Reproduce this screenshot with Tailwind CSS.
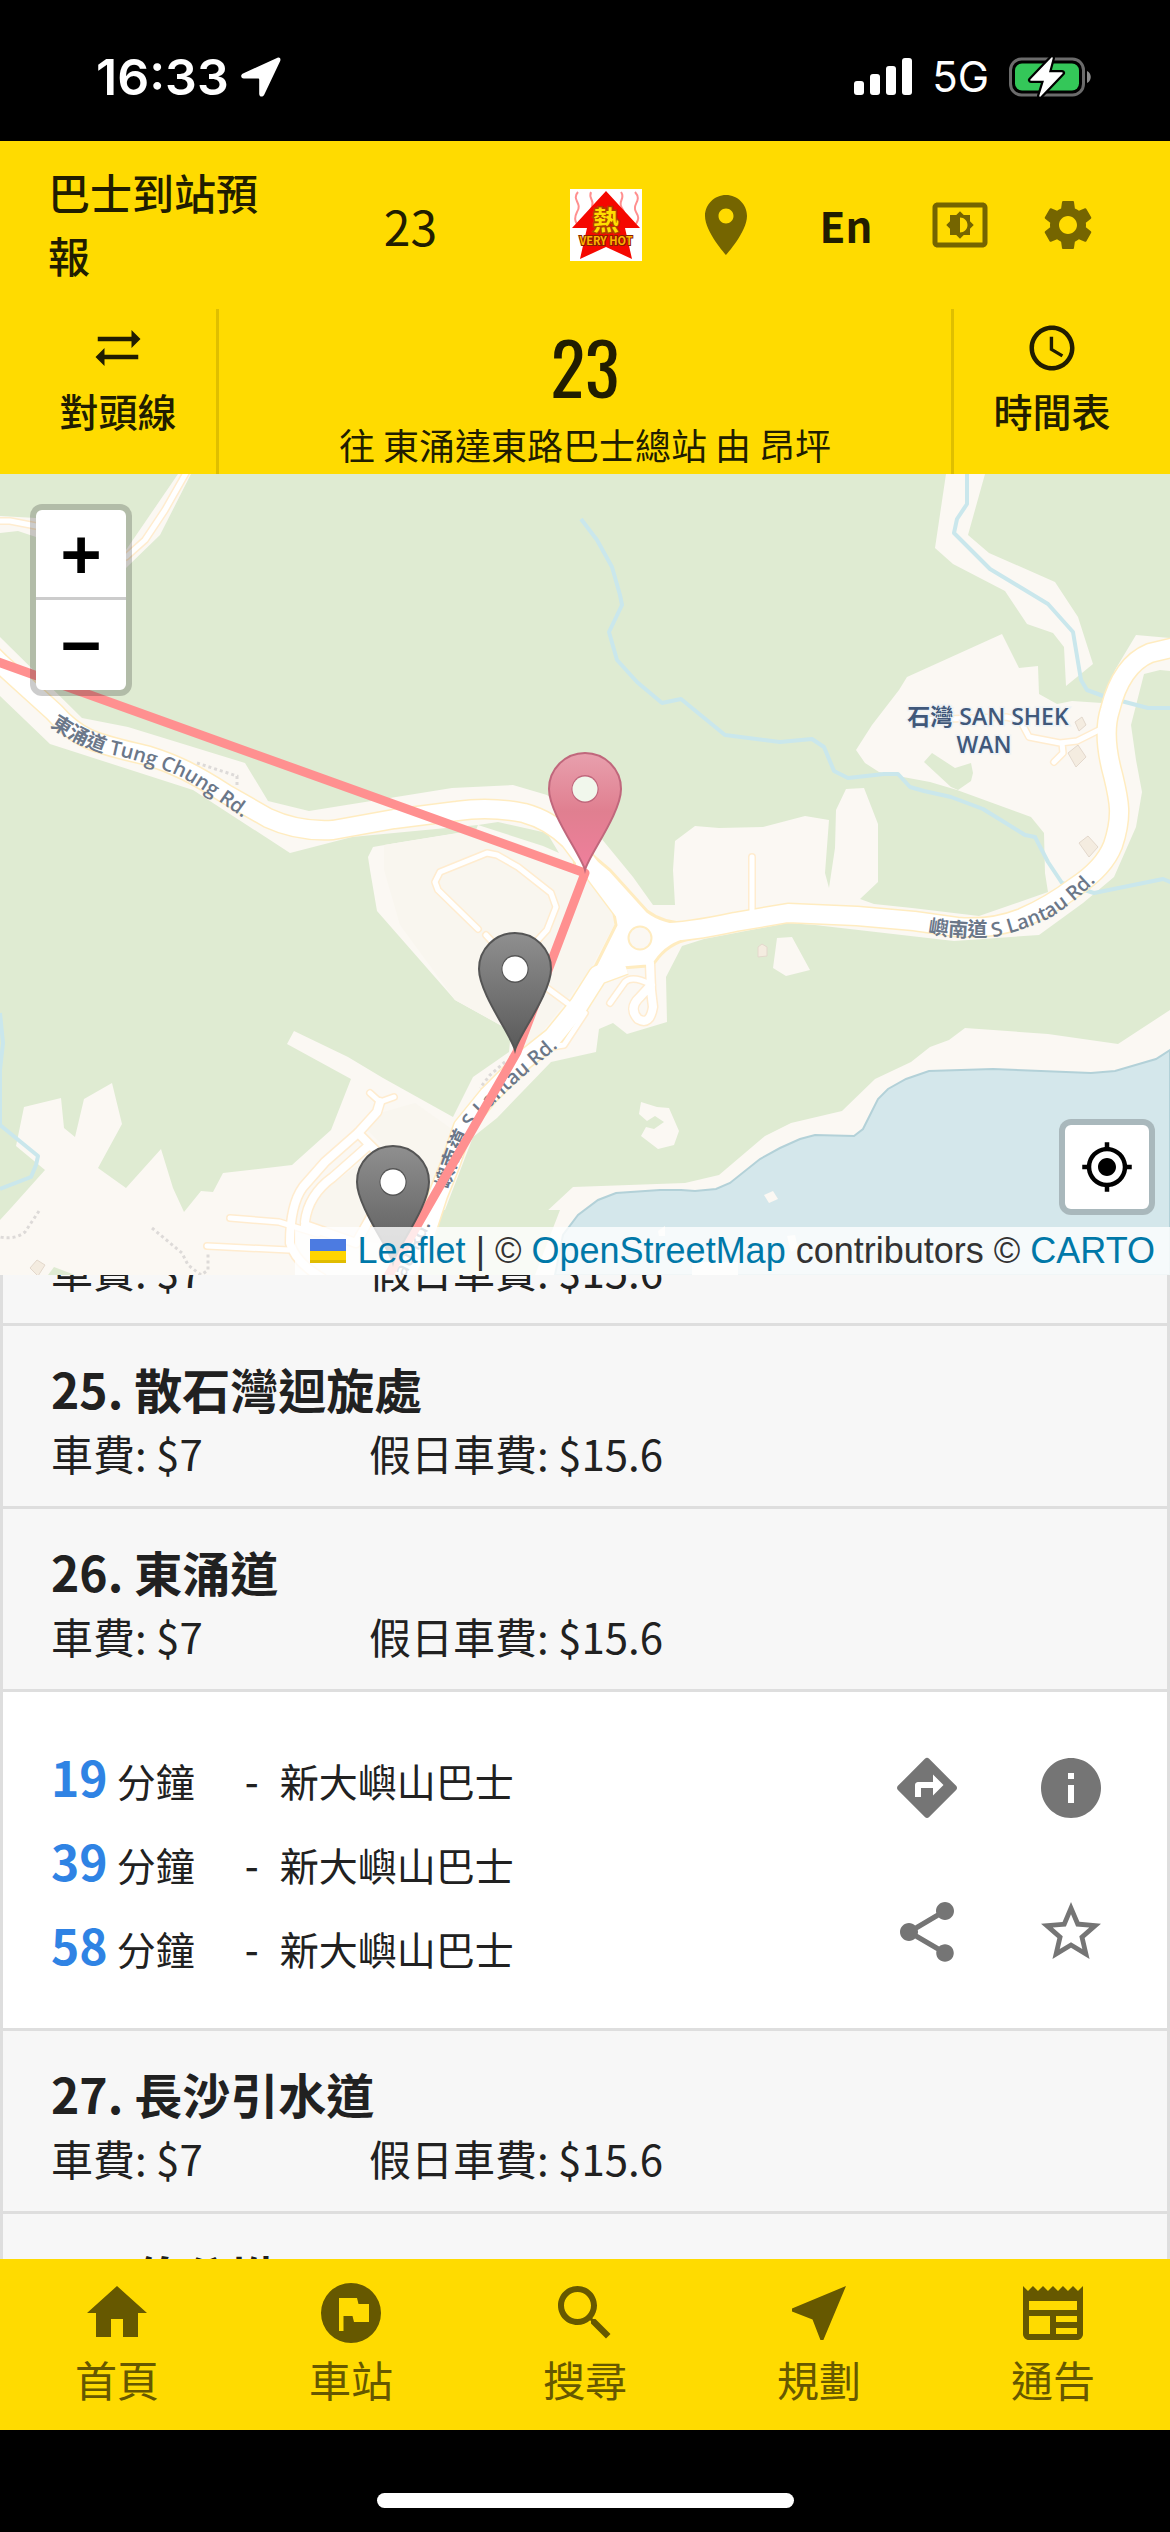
<!DOCTYPE html>
<html lang="zh-HK">
<head>
    <meta charset="UTF-8">
    <meta name="viewport" content="width=device-width, initial-scale=1.0">
    <title>23 往 東涌達東路巴士總站 - 巴士到站預報</title>
    <script src="https://cdn.jsdelivr.net/npm/@tailwindcss/browser@4"></script>
</head>
<body class="bg-black">
<div class="flex flex-col h-screen overflow-hidden text-[#212121] font-['Noto_Sans_CJK_TC','Noto_Sans',sans-serif]">

    <!-- Status bar -->
    <div class="h-[141px] shrink-0 bg-black text-white flex items-center justify-between pl-24 pr-[78px] pb-[52px] pt-16 font-['Inter',sans-serif]">
        <div class="flex items-center gap-3">
            <span class="text-[50px] leading-none font-semibold">16:33</span>
            <svg class="w-10 h-10" viewBox="0 0 40 40" fill="#fff"><path d="M36.500.8 2 16.500c-2.800 1.300-2.200 5 .8 5H17c.8 0 1.200.4 1.200 1.200v14.200c0 3 3.800 3.600 5 .8L39.200 4c.9-2.200-.6-4-2.700-3.200z"/></svg>
        </div>
        <div class="flex items-center gap-5">
            <svg class="w-[58px] h-[38px]" viewBox="0 0 58 38" fill="#fff">
                <rect x="0" y="23" width="10" height="14" rx="3"/>
                <rect x="16" y="16" width="10" height="21" rx="3"/>
                <rect x="32" y="8" width="10" height="29" rx="3"/>
                <rect x="48" y="0" width="10" height="37" rx="3"/>
            </svg>
            <span class="text-[42px] leading-none">5G</span>
            <svg class="w-[83px] h-[42px]" viewBox="0 0 83 42">
                <rect x="1.500" y="3" width="73" height="36" rx="11" fill="none" stroke="#6b6b6b" stroke-width="3"/>
                <path d="M78 15c5 2 5 10 0 12z" fill="#8b8b8b"/>
                <rect x="6" y="7.500" width="64" height="27" rx="7" fill="#34c759"/>
                <path d="M43 2 22 24h14l-5 16 22-23H39z" fill="#fff" stroke="#000" stroke-width="6" stroke-linejoin="round"/>
                <path d="M43 2 22 24h14l-5 16 22-23H39z" fill="#fff" stroke="#fff" stroke-width="1.500" stroke-linejoin="round"/>
            </svg>
        </div>
    </div>

    <!-- Toolbar -->
    <header class="h-[168px] shrink-0 bg-[#ffdb00] text-[#211d00] flex items-center justify-between pl-12 pr-[72px]">
        <h1 class="w-[211px] pb-1 text-[42px] leading-[63px] font-medium"><a href="#">巴士到站預報</a></h1>
        <input type="text" value="23" aria-label="路線" class="w-[150px] mr-2 text-center text-[48px] leading-[72px] bg-transparent outline-none">
        <div class="flex items-center gap-12 text-[#756500]">
            <a href="#" aria-label="酷熱天氣警告">
                <svg class="w-[72px] h-[72px]" viewBox="0 0 72 72">
                    <rect width="72" height="72" fill="#fff"/>
                    <g fill="none" stroke="#ff8f8f" stroke-width="2">
                        <path d="M8 3c-7 8 5 11-1 20-2 4-3 8 0 12M21 3c-3 7 4 8 1 15-3 6-3 8-1 12M51 3c5 7-4 9 1 16 3 4 2 7 0 11M65 3c8 9-4 12 1 20 3 5 3 7 0 12"/>
                    </g>
                    <path d="M36 2 2 39h15L10 70l26-12 26 12-7-31h15z" fill="#f50800"/>
                    <text x="36" y="41" text-anchor="middle" font-size="26" font-weight="700" fill="#ffdf00" stroke="#b04000" stroke-width="3" paint-order="stroke">熱</text>
                    <text x="36" y="56" text-anchor="middle" font-size="11" font-weight="700" fill="#ffb400" stroke="#8a2000" stroke-width="2" paint-order="stroke">VERY HOT</text>
                </svg>
            </a>
            <button aria-label="位置">
                <svg class="w-[72px] h-[72px]" viewBox="0 0 24 24" fill="currentColor"><path d="M12 2C8.130 2 5 5.130 5 9c0 5.250 7 13 7 13s7-7.750 7-13c0-3.870-3.130-7-7-7m0 9.500c-1.380 0-2.500-1.120-2.500-2.500s1.120-2.500 2.500-2.500 2.500 1.120 2.500 2.500-1.120 2.500-2.500 2.500"/></svg>
            </button>
            <button class="w-[72px] text-[42px] leading-[60px] font-bold text-[#211d00]">En</button>
            <button aria-label="亮度">
                <svg class="w-[60px] h-[60px]" viewBox="0 0 24 24" fill="currentColor"><path d="M21 3H3c-1.100 0-2 .9-2 2v14c0 1.100.9 2 2 2h18c1.100 0 2-.9 2-2V5c0-1.100-.9-2-2-2m0 16.010H3V4.990h18zM8 16h2.500l1.500 1.500 1.500-1.500H16v-2.500l1.500-1.500-1.500-1.500V8h-2.500L12 6.500 10.500 8H8v2.500L6.500 12 8 13.500zm4-7c1.660 0 3 1.340 3 3s-1.340 3-3 3z"/></svg>
            </button>
            <button aria-label="設定">
                <svg class="w-[60px] h-[60px]" viewBox="0 0 24 24" fill="currentColor"><path d="M19.140 12.940c.04-.3.060-.61.060-.94 0-.32-.02-.64-.07-.94l2.030-1.580c.18-.14.230-.41.120-.61l-1.920-3.320c-.12-.22-.37-.29-.59-.22l-2.390.96c-.5-.38-1.030-.7-1.620-.94l-.36-2.540c-.04-.24-.24-.41-.48-.41h-3.840c-.24 0-.43.170-.47.410l-.36 2.540c-.59.240-1.130.570-1.620.940l-2.390-.96c-.22-.08-.47 0-.59.220L2.740 8.870c-.12.210-.08.470.120.610l2.030 1.580c-.05.3-.09.630-.09.940s.02.640.07.940l-2.030 1.580c-.18.140-.23.410-.12.610l1.920 3.320c.12.220.37.290.59.220l2.390-.96c.5.380 1.030.7 1.620.94l.36 2.540c.05.240.24.410.48.410h3.840c.24 0 .44-.17.470-.41l.36-2.540c.59-.24 1.130-.56 1.620-.94l2.390.96c.22.080.47 0 .59-.22l1.920-3.320c.12-.22.070-.47-.12-.61zM12 15.600c-1.980 0-3.600-1.620-3.600-3.600s1.620-3.600 3.600-3.600 3.600 1.620 3.600 3.600-1.620 3.600-3.600 3.600"/></svg>
            </button>
        </div>
    </header>

    <!-- Route header -->
    <section class="h-[165px] shrink-0 bg-[#ffdb00] text-[#211d00] flex">
        <button class="w-[219px] pl-5 border-r-[3px] border-[#dfbf00] flex flex-col items-center pt-3">
            <svg class="w-[54px] h-[54px]" viewBox="0 0 24 24" fill="currentColor"><path d="m18 12 4-4-4-4v3H3v2h15zM6 12l-4 4 4 4v-3h15v-2H6z"/></svg>
            <span class="text-[39px] leading-[70px] font-medium">對頭線</span>
        </button>
        <div class="flex-1 flex flex-col items-center justify-end">
            <h2 class="text-[72px] leading-[96px] font-normal font-['Oswald','Liberation_Sans_Narrow','Open_Sans_Condensed','Roboto_Condensed',sans-serif]">23</h2>
            <p class="text-[36px] leading-[60px]">往 東涌達東路巴士總站 由 昂坪</p>
        </div>
        <button class="w-[219px] pr-5 border-l-[3px] border-[#dfbf00] flex flex-col items-center pt-3">
            <svg class="w-[54px] h-[54px]" viewBox="0 0 24 24" fill="currentColor"><path d="M11.990 2C6.470 2 2 6.480 2 12s4.470 10 9.990 10C17.520 22 22 17.520 22 12S17.520 2 11.990 2M12 20c-4.420 0-8-3.580-8-8s3.580-8 8-8 8 3.580 8 8-3.580 8-8 8m.5-13H11v6l5.250 3.150.75-1.230-4.500-2.670z"/></svg>
            <span class="text-[39px] leading-[70px] font-medium">時間表</span>
        </button>
    </section>

    <!-- Map -->
    <section class="relative h-[801px] shrink-0 bg-[#dfebd2] overflow-hidden">
        <svg class="block w-full h-full" viewBox="0 474 1170 801" preserveAspectRatio="xMidYMid slice">
            <defs>
                <linearGradient id="grayPin" x1="0" y1="0" x2="0" y2="1">
                    <stop offset="0" stop-color="#8f8f8f"/><stop offset="1" stop-color="#5a5a5a"/>
                </linearGradient>
                <linearGradient id="pinkPin" x1="0" y1="0" x2="0" y2="1">
                    <stop offset="0" stop-color="#e8a0ad"/><stop offset=".5" stop-color="#e07f90"/><stop offset="1" stop-color="#f07f9c"/>
                </linearGradient>
                <path id="pin" d="M0-1C-4-16-36-58-36-82A36 36 0 0 1 36-82C36-58 4-16 0-1zM0-95A12.500 13 0 1 0 .1-95z" fill-rule="evenodd"/>
                <path id="tungChung" d="M50 726Q75 744 104 753Q150 762 185 779Q220 800 275 842"/>
                <path id="lantauEast" d="M928 933Q960 939 995 937Q1025 930 1050 918Q1080 900 1116 860"/>
                <path id="lantauSouth" d="M449 1190Q462 1140 480 1118Q500 1095 575 1033"/>
                <path id="lantauLow" d="M376 1330Q410 1275 450 1180"/>

                <!-- roads are drawn twice: casing, then surface -->
                <g id="mainRoads" fill="none" stroke-linejoin="round">
                    <path d="M-10 653L0 663L54 712C80 742 100 744 149 756C175 764 195 774 226 794L268 818Q298 832 333 830L394 819L457 811Q490 806 524 813Q550 820 570 840L600 880L630 920"/>
                    <path d="M650 932Q680 934 735 922L788 913L857 916L914 921L957 927Q992 930 1022 918Q1050 906 1075 887Q1104 868 1113 845C1123 815 1119 800 1113 775Q1102 735 1110 710Q1121 665 1150 653L1180 646"/>
                    <path d="M625 965L598 975L579 1005L553 1037L524 1060L489 1095L463 1127L450 1165L438 1195L425 1235L400 1285"/>
                </g>
                <path id="junction" d="M572 838L610 870L647 911Q664 924 690 923L690 939Q668 943 655 962L647 966L622 968Q612 970 604 980L585 1008L567 1010L595 967L616 925L611 897L597 882L575 868z"/>
                <g id="sideRoads" fill="none" stroke-linejoin="round" stroke-linecap="round">
                    <path d="M536 942L547 930L556 907L551 893L518 867L497 855L487 853L440 872L435 882L438 890L478 929"/>
                    <path d="M486 935L497 947M547 988L570 1005M585 1013L564 1045L551 1047"/>
                    <path d="M752 912V857M610 1003L625 982Q632 975 650 984"/>
                    <path d="M-5 521L10 521L36 526L90 544L126 557L145 540L165 510L190 466"/>
                    <path d="M1105 727L1077 741L1060 743L1029 737L1020 720L1006 717L918 720M1062 743L1063 753L1054 762"/>
                    <path d="M370 1093L380 1102L394 1097M230 1218L279 1222L318 1234M207 1246L289 1250"/>
                </g>
                <g id="midRoads" fill="none" stroke-linejoin="round" stroke-linecap="round">
                    <path d="M380 1102L377 1112L358 1133L325 1162L303 1187Q290 1205 290 1243Q295 1262 322 1278"/>
                    <path d="M367 1147L333 1177Q308 1195 305 1222M358 1133L385 1160M305 1225L356 1243L372 1215"/>
                    <path d="M650 963L651 990L653 1007Q650 1026 638 1019Q628 1008 640 997L651 985"/>
                </g>
            </defs>

            <!-- open land -->
            <g fill="#fbf8f3">
                <path d="M0 637L82 718L128 727L245 763L268 801L309 811L452 788L513 785L547 795L601 838L633 877L653 905L675 905L673 870L675 841L695 826L719 828L763 827L805 816L829 820L825 873L829 888L835 848L836 810L846 789L864 788L878 824L878 882L860 899L874 904L912 908L979 916L1048 892L1045 873L1044 833L1031 817L957 790L930 782L903 777L879 772L865 763L856 750L872 725L899 690L907 677L1002 634L1019 668L1038 666L1039 694L1057 704L1072 701L1102 703L1115 670L1136 635L1170 638V671L1160 670L1144 674L1131 725L1136 760L1142 792L1136 827L1114 877L1083 903L1039 935L954 941L815 925L788 923L704 939L682 946L666 977L667 1022L627 1034L613 1023L599 1029L596 1052L551 1062L497 1118L473 1137L440 1223L425 1275H0V1220L11 1208L45 1170L16 1146L24 1107L61 1098L64 1128L75 1137L84 1099L112 1083L122 1124L98 1168L126 1188L161 1149L173 1188L184 1212L201 1191L213 1192L223 1173L292 1165L331 1130L351 1079L287 1044L294 1031L348 1057L383 1078L453 1117L473 1077L509 1052L511 1031L455 1000L377 911L370 870L368 857L373 847L402 842L476 830L478 825L352 837L290 853L193 790L50 744L0 696z"/>
                <path d="M946 474L935 548L953 564L1005 591L1027 624L1053 633L1064 647L1066 686L1093 664L1078 617L1055 582L989 553L968 535L985 474z"/>
                <path d="M0 533L18 531L36 537L90 556L126 568L160 535L191 474H178L126 550L36 518L0 516z"/>
                <path d="M425 1275L541 1227L545 1213L573 1187L685 1183L719 1175L765 1136L791 1123L842 1111L875 1079L911 1062L930 1047L949 1040L965 1028L1048 1034L1118 1044L1170 1010V1275z"/>
                <path d="M777 938L792 937L810 970L786 976L773 968zM641 1102L657 1107L669 1108L679 1131L674 1145L658 1149L641 1136L646 1127L654 1129L664 1122L655 1116L647 1121L639 1114z"/>
            </g>
            <g fill="#f9f6ef">
                <path d="M384 845L478 830L560 858L598 882L612 900L614 925L590 970L530 1048L511 1031L455 1000L400 925L384 870z"/>
                <path d="M378 1150L383 1145L365 1128L383 1112L415 1103L453 1130L430 1190L400 1245L350 1240L310 1220L318 1195z"/>
            </g>
            <g fill="#dfebd2">
                <path d="M924 762L932 753L955 768L971 763L973 773L971 781L958 790L951 787z"/>
                <path d="M498 822L547 833L559 853L543 846L478 825z"/>
                <path d="M425 1245L440 1210L560 1210L535 1275H410z"/>
                <path d="M48 1275L54 1267L75 1275z"/>
            </g>

            <!-- sea -->
            <path d="M1170 1050L1156 1059L1115 1071L1091 1073L993 1069L929 1071L906 1079L888 1089L878 1099L863 1129L854 1136L815 1135L800 1139L780 1148L760 1159L730 1183L716 1189L695 1191L681 1190L660 1190L616 1193L598 1200L578 1215L563 1235L555 1275H1170z" fill="#d4e7eb" stroke="#b3d1d8" stroke-width="2"/>
            <path d="M764 1195L773 1191L778 1199L769 1203zM658 1231L665 1226V1236H659zM787 1236L795 1235L798 1248L791 1252zM692 1262H738V1275H692z" fill="#fbf8f3"/>

            <!-- streams -->
            <g fill="none" stroke="#cae7ec" stroke-width="4" stroke-linejoin="round">
                <path d="M581 519L597 540L612 567L620 595L622 605L609 632L617 660L637 682L662 703L681 699L725 735L780 742L812 739L824 747L834 771L848 778L884 774L898 774L910 787L924 791L951 797L983 809L1025 835L1035 837L1048 862L1062 883L1094 893L1163 879L1175 884"/>
                <path d="M967 470V504L957 519L954 533L990 569L1048 604L1073 632L1081 680L1087 690L1106 697L1148 708H1175"/>
                <path d="M0 1013L3 1043L0 1070V1125L38 1156L36 1165L31 1177L0 1189"/>
            </g>

            <use href="#sideRoads" stroke="#ffeccf" stroke-width="8"/>
            <use href="#midRoads" stroke="#ffeccf" stroke-width="11"/>
            <use href="#mainRoads" stroke="#ffecc0" stroke-width="21"/>
            <use href="#junction" fill="#fff" stroke="#ffecc0" stroke-width="3"/>
            <use href="#sideRoads" stroke="#fff" stroke-width="5"/>
            <use href="#midRoads" stroke="#fff" stroke-width="8"/>
            <use href="#mainRoads" stroke="#fff" stroke-width="18"/>
            <circle cx="640" cy="938" r="11.500" fill="#fbf8f3" stroke="#ffecc0" stroke-width="2"/>

            <g fill="none" stroke="#dddad8" stroke-width="3" stroke-dasharray="3 3">
                <path d="M197 763L237 776V787M505 1062L490 1075L480 1088M39 1211L25 1232Q15 1240 0 1237M152 1228L182 1253L188 1265L201 1275L208 1270V1252"/>
            </g>
            <g fill="#f4ece0" stroke="#e3d8cc" stroke-width="1">
                <path d="M1075 722L1082 717L1086 725L1079 731zM1068 753L1078 745L1086 757L1076 767zM1079 843L1088 836L1098 847L1089 857zM758 947L762 944L767 947V956L758 957zM30 1268L37 1260L45 1265L38 1276z"/>
            </g>

            <g class="font-['Open_Sans','Noto_Sans_CJK_TC',sans-serif]" font-size="20" font-weight="600" fill="#6b7789">
                <text><textPath href="#tungChung">東涌道 Tung Chung Rd.</textPath></text>
                <text><textPath href="#lantauEast">嶼南道 S Lantau Rd.</textPath></text>
                <text><textPath href="#lantauSouth">嶼南道 S Lantau Rd.</textPath></text>
                <text><textPath href="#lantauLow">S Lantau Rd.</textPath></text>
            </g>
            <g class="font-['Open_Sans','Noto_Sans_CJK_TC',sans-serif]" font-size="23" font-weight="600" fill="#40587a" stroke="#eef2f5" stroke-width="3" paint-order="stroke" text-anchor="middle">
                <text x="988" y="725">石灣 SAN SHEK</text>
                <text x="984" y="753">WAN</text>
            </g>

            <!-- bus route -->
            <path d="M-10 659L585 873L517 1052L380 1290" fill="none" stroke="#ff9090" stroke-width="9" stroke-linejoin="round"/>

            <!-- stops -->
            <g stroke-width="2">
                <use href="#pin" x="585" y="871" fill="url(#pinkPin)" stroke="#c0677c"/>
                <use href="#pin" x="515" y="1051" fill="url(#grayPin)" stroke="#555"/>
                <use href="#pin" x="393" y="1264" fill="url(#grayPin)" stroke="#555"/>
            </g>
            <g fill="#fff">
                <circle cx="585" cy="789" r="12.500" fill="#f1f7ec"/>
                <circle cx="515" cy="969" r="12.500"/>
                <circle cx="393" cy="1182" r="12.500"/>
            </g>
        </svg>

        <div class="absolute left-[30px] top-[30px] border-[6px] border-black/20 bg-clip-padding rounded-xl bg-white overflow-hidden flex flex-col text-black font-bold font-['DejaVu_Sans_Mono',monospace] text-[66px]">
            <button aria-label="Zoom in" class="w-[90px] h-[90px] leading-[84px] border-b-[3px] border-[#ccc]">+</button>
            <button aria-label="Zoom out" class="w-[90px] h-[90px] leading-[84px]">−</button>
        </div>

        <button aria-label="我的位置" class="absolute right-[15px] bottom-[60px] w-24 h-24 border-[6px] border-black/20 bg-clip-padding rounded-xl bg-white flex items-center justify-center text-black">
            <svg class="w-[54px] h-[54px]" viewBox="0 0 24 24" fill="currentColor"><path d="M12 8c-2.210 0-4 1.790-4 4s1.790 4 4 4 4-1.790 4-4-1.790-4-4-4m8.940 3c-.46-4.170-3.770-7.480-7.940-7.940V1h-2v2.060C6.830 3.520 3.520 6.830 3.060 11H1v2h2.060c.46 4.170 3.770 7.480 7.940 7.940V23h2v-2.060c4.170-.46 7.480-3.770 7.940-7.940H23v-2zM12 19c-3.870 0-7-3.130-7-7s3.130-7 7-7 7 3.130 7 7-3.130 7-7 7"/></svg>
        </button>

        <div class="absolute right-0 bottom-0 h-12 px-[15px] bg-white/80 flex items-center whitespace-nowrap text-[36px] leading-[48px] text-[#333] font-['Liberation_Sans',sans-serif]">
            <svg class="w-9 h-6 mr-3" viewBox="0 0 12 8"><path fill="#4c7be1" d="M0 0h12v4H0z"/><path fill="#ffd500" d="M0 4h12v3H0z"/><path fill="#e0bc00" d="M0 7h12v1H0z"/></svg>
            <p><a href="#" class="text-[#0078a8]">Leaflet</a> | © <a href="#" class="text-[#0078a8]">OpenStreetMap</a> contributors © <a href="#" class="text-[#0078a8]">CARTO</a></p>
        </div>
    </section>

    <!-- Stop list -->
    <main class="flex-1 min-h-0 overflow-hidden bg-[#f7f7f7] border-x-[3px] border-[#dedede]">
        <div class="-mt-[38px] pl-12 pb-5 border-b-[3px] border-[#dedede] flex text-[42px] leading-[66px]">
            <span class="w-[318px]">車費: $7</span><span>假日車費: $15.6</span>
        </div>
        <div class="pl-12 pt-[30px] pb-5 border-b-[3px] border-[#dedede]">
            <h3 class="text-[48px] leading-[64px] font-bold">25. 散石灣迴旋處</h3>
            <p class="flex text-[42px] leading-[66px]"><span class="w-[318px]">車費: $7</span><span>假日車費: $15.6</span></p>
        </div>
        <div class="pl-12 pt-[30px] pb-5 border-b-[3px] border-[#dedede]">
            <h3 class="text-[48px] leading-[64px] font-bold">26. 東涌道</h3>
            <p class="flex text-[42px] leading-[66px]"><span class="w-[318px]">車費: $7</span><span>假日車費: $15.6</span></p>
        </div>
        <div class="bg-white pl-12 pr-6 py-6 border-b-[3px] border-[#dedede] flex items-center justify-between">
            <ul class="text-[39px] leading-[84px]">
                <li class="flex items-baseline h-[84px]"><b class="text-[48px] text-[#2f83e4] mr-[9px]">19</b><span class="w-32">分鐘</span><span class="w-[35px] font-medium">-</span><span>新大嶼山巴士</span></li>
                <li class="flex items-baseline h-[84px]"><b class="text-[48px] text-[#2f83e4] mr-[9px]">39</b><span class="w-32">分鐘</span><span class="w-[35px] font-medium">-</span><span>新大嶼山巴士</span></li>
                <li class="flex items-baseline h-[84px]"><b class="text-[48px] text-[#2f83e4] mr-[9px]">58</b><span class="w-32">分鐘</span><span class="w-[35px] font-medium">-</span><span>新大嶼山巴士</span></li>
            </ul>
            <div class="grid grid-cols-2 text-[#757575]">
                <button aria-label="路線指引" class="p-9">
                    <svg class="w-[72px] h-[72px]" viewBox="0 0 24 24" fill="currentColor"><path d="m21.710 11.290-9-9a.996.996 0 0 0-1.410 0l-9 9c-.39.390-.39 1.020 0 1.410l9 9c.39.390 1.020.390 1.410 0l9-9c.39-.38.390-1.010 0-1.410M14 14.500V12h-4v3H8v-4c0-.55.450-1 1-1h5V7.500l3.500 3.500z"/></svg>
                </button>
                <button aria-label="資料" class="p-9">
                    <svg class="w-[72px] h-[72px]" viewBox="0 0 24 24" fill="currentColor"><path d="M12 2C6.480 2 2 6.480 2 12s4.480 10 10 10 10-4.480 10-10S17.520 2 12 2m1 15h-2v-6h2zm0-8h-2V7h2z"/></svg>
                </button>
                <button aria-label="分享" class="p-9">
                    <svg class="w-[72px] h-[72px]" viewBox="0 0 24 24" fill="currentColor"><path d="M18 16.080c-.76 0-1.440.3-1.960.77L8.910 12.700c.05-.23.090-.46.090-.7s-.04-.47-.09-.7l7.050-4.110c.54.5 1.250.81 2.040.81 1.660 0 3-1.340 3-3s-1.340-3-3-3-3 1.340-3 3c0 .24.040.470.090.7L8.040 9.810C7.500 9.310 6.790 9 6 9c-1.660 0-3 1.340-3 3s1.340 3 3 3c.79 0 1.500-.31 2.040-.81l7.120 4.160c-.05.210-.08.430-.08.650 0 1.610 1.310 2.920 2.920 2.920s2.920-1.310 2.920-2.920-1.310-2.920-2.920-2.920"/></svg>
                </button>
                <button aria-label="收藏" class="p-9">
                    <svg class="w-[72px] h-[72px]" viewBox="0 0 24 24" fill="currentColor"><path d="m22 9.240-7.190-.62L12 2 9.190 8.630 2 9.240l5.460 4.730L5.820 21 12 17.270 18.180 21l-1.630-7.030zM12 15.400l-3.760 2.270 1-4.280-3.320-2.880 4.380-.38L12 6.100l1.710 4.040 4.380.38-3.320 2.880 1 4.280z"/></svg>
                </button>
            </div>
        </div>
        <div class="pl-12 pt-[30px] pb-5 border-b-[3px] border-[#dedede]">
            <h3 class="text-[48px] leading-[64px] font-bold">27. 長沙引水道</h3>
            <p class="flex text-[42px] leading-[66px]"><span class="w-[318px]">車費: $7</span><span>假日車費: $15.6</span></p>
        </div>
        <div class="pl-12 pt-[30px]">
            <h3 class="text-[48px] leading-[64px] font-bold">28. 伯公坳</h3>
        </div>
    </main>

    <!-- Bottom navigation -->
    <nav class="h-[171px] shrink-0 bg-[#ffdb00] text-[#665800] grid grid-cols-5 text-[42px] leading-[60px]">
        <a href="#" class="flex flex-col items-center pt-[18px]">
            <svg class="w-[72px] h-[72px]" viewBox="0 0 24 24" fill="currentColor"><path d="M10 20v-6h4v6h5v-8h3L12 3 2 12h3v8z"/></svg>
            首頁
        </a>
        <a href="#" class="flex flex-col items-center pt-[18px]">
            <svg class="w-[72px] h-[72px]" viewBox="0 0 24 24" fill="currentColor"><path fill-rule="evenodd" d="M12 2a10 10 0 1 0 0 20 10 10 0 0 0 0-20zM8 7h6l.5 2H18v6h-5l-.5-2h-3v5H8z"/></svg>
            車站
        </a>
        <a href="#" class="flex flex-col items-center pt-[18px]">
            <svg class="w-[72px] h-[72px]" viewBox="0 0 24 24" fill="currentColor"><path d="M15.500 14h-.79l-.28-.27C15.410 12.590 16 11.110 16 9.500 16 5.910 13.090 3 9.500 3S3 5.910 3 9.500 5.910 16 9.500 16c1.610 0 3.090-.59 4.230-1.570l.27.28v.79l5 4.990L20.490 19zm-6 0C7.010 14 5 11.990 5 9.500S7.010 5 9.500 5 14 7.010 14 9.500 11.990 14 9.500 14"/></svg>
            搜尋
        </a>
        <a href="#" class="flex flex-col items-center pt-[18px]">
            <svg class="w-[72px] h-[72px]" viewBox="0 0 24 24" fill="currentColor"><path d="M21 3 3 10.530v.98l6.840 2.650L12.480 21h.98z"/></svg>
            規劃
        </a>
        <a href="#" class="flex flex-col items-center pt-[18px]">
            <svg class="w-[72px] h-[72px]" viewBox="0 0 24 24" fill="currentColor"><path d="m22 3-1.670 1.670L18.670 3 17 4.670 15.330 3l-1.660 1.670L12 3l-1.670 1.670L8.670 3 7 4.670 5.330 3 3.670 4.670 2 3v16c0 1.100.9 2 2 2h16c1.100 0 2-.9 2-2zm-11 16H4v-6h7zm9 0h-7v-2h7zm0-4h-7v-2h7zm0-4H4V8h16z"/></svg>
            通告
        </a>
    </nav>

    <!-- Home indicator -->
    <div class="h-[102px] shrink-0 bg-black flex items-end justify-center pb-6">
        <div class="w-[417px] h-[15px] rounded-full bg-white"></div>
    </div>
</div>
</body>
</html>
